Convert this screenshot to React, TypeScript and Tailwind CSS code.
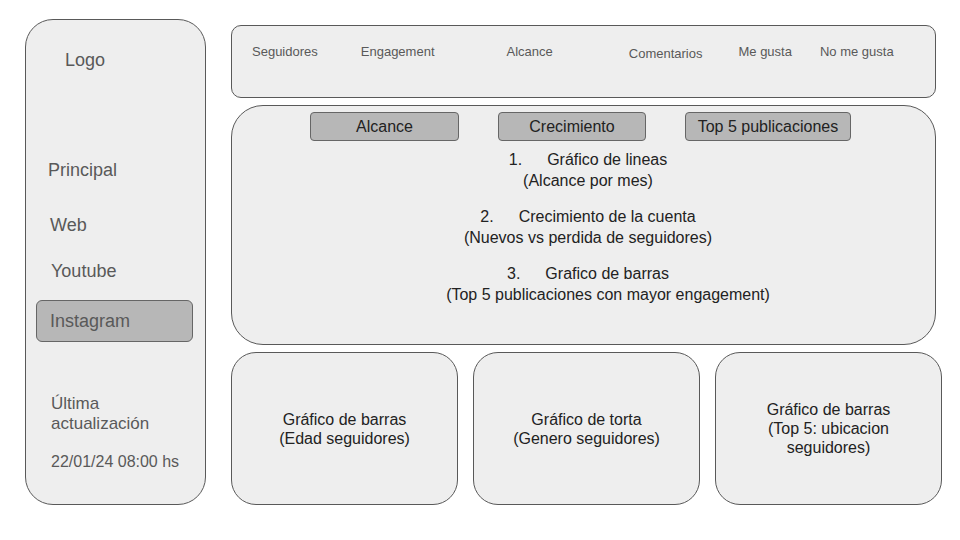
export default function App() {
  const metrics = [
    { label: 'Seguidores', cls: 'ml-[20px]' },
    { label: 'Engagement', cls: 'ml-[43px]' },
    { label: 'Alcance', cls: 'ml-[72px]' },
    { label: 'Comentarios', cls: 'ml-[76px] mt-[2px]' },
    { label: 'Me gusta', cls: 'ml-[36px]' },
    { label: 'No me gusta', cls: 'ml-[28px]' },
  ]

  return (
    <div className="w-[960px] h-[540px] bg-white flex gap-[25px] pl-[25px] font-['Liberation_Sans',Arial,sans-serif]">
      {/* Sidebar */}
      <aside className="mt-[19px] w-[181px] h-[486px] bg-[#eeeeee] border border-[#595959] rounded-[28px] flex flex-col text-[#595959]">
        <div className="mt-[29px] ml-[39px] text-[18px] leading-[22px]">Logo</div>
        <nav className="mt-[88px] flex flex-col text-[18px] leading-[22px]">
          <div className="ml-[22px]">Principal</div>
          <div className="ml-[24px] mt-[33px]">Web</div>
          <div className="ml-[25px] mt-[24px]">Youtube</div>
          <div className="ml-[10px] mr-[12px] mt-[18px] h-[42px] bg-[#b7b7b7] border border-[#666666] rounded-[6px] flex items-center pl-[13px]">
            Instagram
          </div>
        </nav>
        <div className="mt-[52px] ml-[25px] text-[17px] leading-[20px]">
          <div>Última</div>
          <div>actualización</div>
        </div>
        <div className="mt-[18px] ml-[25px] text-[16px] leading-[20px]">22/01/24 08:00 hs</div>
      </aside>

      {/* Main column */}
      <main className="mt-[25px] w-[712px] flex flex-col gap-[7px]">
        {/* Metric bar */}
        <div className="w-[705px] h-[73px] bg-[#eeeeee] border border-[#595959] rounded-[10px] flex items-start pt-[18px] text-[13px] leading-[16px] text-[#595959]">
          {metrics.map((m) => (
            <span key={m.label} className={m.cls}>
              {m.label}
            </span>
          ))}
        </div>

        {/* Charts panel */}
        <div className="w-[705px] h-[240px] bg-[#eeeeee] border border-[#595959] rounded-[32px] flex flex-col items-center text-[16px] text-[#222222]">
          <div className="mt-[6px] flex gap-[39px] -ml-[6px]">
            <button className="w-[149px] h-[29px] bg-[#b7b7b7] border border-[#666666] rounded-[4px] text-[16px]">Alcance</button>
            <button className="w-[148px] h-[29px] bg-[#b7b7b7] border border-[#666666] rounded-[4px] text-[16px]">Crecimiento</button>
            <button className="w-[166px] h-[29px] bg-[#b7b7b7] border border-[#666666] rounded-[4px] text-[16px]">Top 5 publicaciones</button>
          </div>
          <div className="mt-[8px] ml-[9px] flex flex-col items-center leading-[21px] text-center">
            <div>
              <span className="mr-[25px]">1.</span>Gráfico de lineas
            </div>
            <div>(Alcance por mes)</div>
            <div className="mt-[15px]">
              <span className="mr-[25px]">2.</span>Crecimiento de la cuenta
            </div>
            <div>(Nuevos vs perdida de seguidores)</div>
            <div className="mt-[15px]">
              <span className="mr-[25px]">3.</span>Grafico de barras
            </div>
            <div className="ml-[40px]">(Top 5 publicaciones con mayor engagement)</div>
          </div>
        </div>

        {/* Bottom cards */}
        <div className="flex gap-[15px] text-[16px] leading-[19px] text-[#222222] text-center">
          <div className="w-[227px] h-[153px] bg-[#eeeeee] border border-[#595959] rounded-[25px] flex items-center justify-center">
            <div>
              Gráfico de barras
              <br />
              (Edad seguidores)
            </div>
          </div>
          <div className="w-[227px] h-[153px] bg-[#eeeeee] border border-[#595959] rounded-[25px] flex items-center justify-center">
            <div>
              Gráfico de torta
              <br />
              (Genero seguidores)
            </div>
          </div>
          <div className="w-[227px] h-[153px] bg-[#eeeeee] border border-[#595959] rounded-[25px] flex items-center justify-center">
            <div>
              Gráfico de barras
              <br />
              (Top 5: ubicacion
              <br />
              seguidores)
            </div>
          </div>
        </div>
      </main>
    </div>
  )
}
